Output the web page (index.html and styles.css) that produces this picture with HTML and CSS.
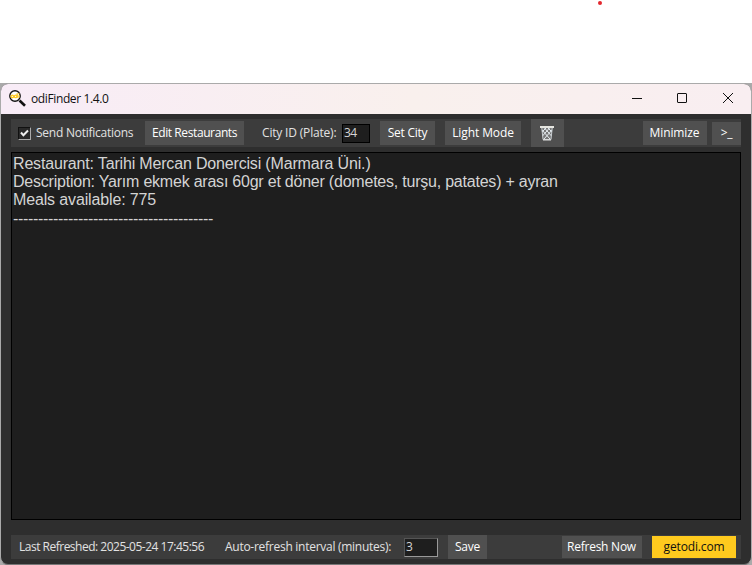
FILE: index.html
```html
<!DOCTYPE html>
<html lang="en">
<head>
<meta charset="utf-8">
<title>odiFinder 1.4.0</title>
<link rel="stylesheet" href="styles.css">
</head>
<body>
<div class="desktop">
  <span class="dot"></span>
  <main class="window">
    <header class="titlebar">
      <svg class="logo" width="18" height="18" viewBox="0 0 18 18">
        <path d="M10.5 10.5L16 15.8" stroke="#111" stroke-width="2.6"/>
        <circle cx="6" cy="6" r="5.2" fill="#fff" stroke="#111" stroke-width="1.4"/>
        <g fill="none" stroke="#ffc91f" stroke-width="1.3"><circle cx="3.3" cy="6.4" r="1.3"/><circle cx="6.7" cy="6.4" r="1.3"/><path d="M8.2 3.2v4.6M10 5.2v2.6M10 3.2v1"/></g>
      </svg>
      <span class="title">odiFinder 1.4.0</span>
      <svg class="controls" width="102" height="12" viewBox="0 0 102 12" fill="none" stroke="#111" stroke-width="1">
        <path d="M0 6.5h10"/>
        <rect x="45.5" y="1.5" width="9" height="9" rx=".5"/>
        <path d="M91 1l10 10M101 1L91 11"/>
      </svg>
    </header>
    <section class="bar toolbar">
      <span class="check"><svg width="11" height="11" viewBox="0 0 11 11"><path d="M2 4.5l2.4 2.8L9 2.5" fill="none" stroke="#eee" stroke-width="2"/></svg></span>
      <span class="label notify">Send Notifications</span>
      <button class="btn edit">Edit Restaurants</button>
      <span class="label city">City ID (Plate):</span>
      <span class="field plate">34</span>
      <button class="btn set">Set City</button>
      <button class="btn mode">Light Mode</button>
      <button class="btn trash"><svg width="14" height="16" viewBox="0 0 14 16" fill="none">
        <path d="M1.7 3L3 14.5h8L12.3 3z" fill="#777"/>
        <path d="M2 5l8 9M4.5 3l7 8M8 3l4 4M12 5l-8 9M9.5 3l-7 8M6 3L2 7" stroke="#e6edf2" stroke-width="1"/>
        <path d="M1.8 3L3 14.5h8L12.2 3" stroke="#c8ced2"/>
        <path d="M0 2h14" stroke="#e5e5e0" stroke-width="2"/>
        <path d="M3 14.8h8" stroke="#ddd" stroke-width="1.2"/>
      </svg></button>
      <button class="btn minimize">Minimize</button>
      <button class="btn console">&gt;_</button>
    </section>
    <section class="output">
      <div class="line l1">Restaurant: Tarihi Mercan Donercisi (Marmara Üni.)</div>
      <div class="line l2">Description: Yarım ekmek arası 60gr et döner (dometes, turşu, patates) + ayran</div>
      <div class="line l3">Meals available: 775</div>
      <div class="line l4">----------------------------------------</div>
    </section>
    <footer class="bar footer">
      <span class="label last">Last Refreshed: 2025-05-24 17:45:56</span>
      <span class="label auto">Auto-refresh interval (minutes):</span>
      <span class="field minutes">3</span>
      <button class="btn save">Save</button>
      <button class="btn refresh">Refresh Now</button>
      <button class="btn site">getodi.com</button>
    </footer>
  </main>
</div>
</body>
</html>
```
FILE: styles.css
```css
* { box-sizing: border-box; }
body { margin: 0; background: #fff; font: 12px/16px "Open Sans", "Noto Sans", sans-serif; }
.desktop { position: relative; height: 565px; padding-top: 83px; overflow: hidden; background: linear-gradient(#fff 83px, #aaa 83px); }
.dot { position: absolute; left: 598px; top: 1px; width: 4px; height: 4px; border-radius: 2px; background: #e3262e; }
.window { width: 752px; height: 482px; border: 1px solid #aaa; border-bottom-color: #777; border-radius: 8px; background: #2e2e2e; overflow: hidden; }
.titlebar { display: flex; align-items: center; height: 30px; padding-left: 8px; background: linear-gradient(90deg, #f8ecf7, #f9f0ed 55%, #f9eef1); color: #111; }
.logo { margin-top: -1px; }
.title { margin-left: 4px; letter-spacing: -.38px; }
.controls { margin-left: auto; margin-right: 17px; margin-top: -2px; }
.bar { display: flex; align-items: center; width: 730px; margin-left: 10px; background: #3c3c3c; }
.toolbar { height: 28px; margin-top: 5px; }
.label, .btn { flex: none; color: #e2e2e2; white-space: nowrap; letter-spacing: -.25px; }
.btn { display: flex; align-items: center; justify-content: center; height: 24px; padding: 0; border: 0; background: #505050; color: #fff; font: inherit; letter-spacing: -.25px; }
.field { flex: none; background: #1e1e1e; color: #d4d4d4; height: 19px; padding-left: 1px; line-height: 16px; letter-spacing: -.5px; }
.check { flex: none; width: 13px; height: 13px; margin-left: 7px; border: 1px solid #111; border-right-color: #aaa; border-bottom-color: #aaa; background: #292929; }
.check svg { display: block; }
.notify { width: 104px; margin-left: 5px; }
.edit { width: 99px; margin-left: 5px; letter-spacing: -.4px; }
.city { width: 80px; margin-left: 18px; letter-spacing: -.18px; }
.plate { width: 28px; border: 1px solid #000; }
.set { width: 55px; margin-left: 10px; }
.mode { width: 76px; margin-left: 10px; letter-spacing: -.1px; }
.trash { width: 33px; height: 28px; margin-left: 10px; padding-right: 2px; }
.minimize { width: 64px; margin-left: auto; padding-right: 1px; letter-spacing: -.1px; }
.console { width: 29px; height: 23px; margin-left: 5px; }
.output { width: 730px; height: 368px; margin: 5px 0 0 10px; padding: 2px 1px; border: 1px solid #000; background: #1e1e1e; color: #d4d4d4; font: 16px/18px "Liberation Sans", Arial, sans-serif; }
.line { white-space: pre; }
.l1 { letter-spacing: -.17px; }
.l2 { letter-spacing: -.22px; }
.l3 { letter-spacing: -.14px; }
.l4 { margin-top: 1px; letter-spacing: -.33px; }
.footer { height: 24px; margin-top: 15px; }
.last { width: 206px; margin-left: 8px; letter-spacing: -.5px; }
.auto { width: 179px; letter-spacing: -.27px; }
.minutes { width: 34px; border: 1px solid #555; border-right-color: #999; border-bottom-color: #999; }
.save { width: 39px; margin-left: 10px; }
.refresh { width: 80px; height: 22px; margin-left: auto; padding-right: 1px; }
.site { width: 84px; height: 22px; margin: 0 5px 0 10px; background: #ffca1e; color: #111; letter-spacing: -.15px; }
```
